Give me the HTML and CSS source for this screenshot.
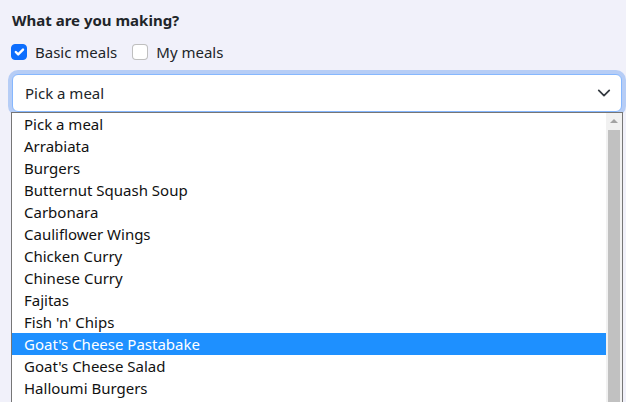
FILE: index.html
```html
<!DOCTYPE html>
<html>
<head>
<meta charset="utf-8">
<link rel="stylesheet" href="styles.css">
</head>
<body>
<div class="page">
  <div class="title">What are you making?</div>
  <div class="checks">
    <label class="check"><span class="box checked"><svg viewBox="0 0 20 20" width="16" height="16"><path d="m6 10 3 3 6-6" fill="none" stroke="#fff" stroke-width="3" stroke-linecap="round" stroke-linejoin="round"/></svg></span>Basic meals</label>
    <label class="check"><span class="box"></span>My meals</label>
  </div>
  <div class="select-wrap">
    <div class="select">
      <span>Pick a meal</span>
      <svg class="chev" viewBox="0 0 16 16" width="14" height="14"><path d="m2 5 6 6 6-6" fill="none" stroke="#343a40" stroke-width="2" stroke-linecap="round" stroke-linejoin="round"/></svg>
    </div>
    <div class="dropdown">
      <div class="options">
        <div class="opt">Pick a meal</div>
        <div class="opt">Arrabiata</div>
        <div class="opt">Burgers</div>
        <div class="opt">Butternut Squash Soup</div>
        <div class="opt">Carbonara</div>
        <div class="opt">Cauliflower Wings</div>
        <div class="opt">Chicken Curry</div>
        <div class="opt">Chinese Curry</div>
        <div class="opt">Fajitas</div>
        <div class="opt">Fish 'n' Chips</div>
        <div class="opt sel">Goat's Cheese Pastabake</div>
        <div class="opt">Goat's Cheese Salad</div>
        <div class="opt">Halloumi Burgers</div>
      </div>
      <div class="scroll">
        <div class="up"></div>
        <div class="thumb"></div>
      </div>
    </div>
  </div>
</div>
</body>
</html>
```
FILE: styles.css
```css
html, body {
  margin: 0;
  padding: 0;
  overflow: hidden;
  height: 100%;
}
body {
  background: #f1f1fa;
  font-family: "Noto Sans", "Open Sans", sans-serif;
  color: #212529;
}
.page {
  padding: 8px 4px 0 12px;
}
.title {
  font-weight: 700;
  font-size: 15px;
  line-height: 24px;
  height: 24px;
}
.checks {
  display: flex;
  gap: 16px;
  margin-top: 8px;
  height: 24px;
  align-items: center;
}
.check {
  display: flex;
  align-items: center;
  gap: 8px;
  font-size: 15px;
  margin-left: -1px;
}
.box {
  width: 16px;
  height: 16px;
  box-sizing: border-box;
  border: 1px solid rgba(0,0,0,.25);
  border-radius: 4px;
  background: #fff;
  display: block;
}
.box.checked {
  background: #0d6efd;
  border-color: #0d6efd;
}
.box svg { display: block; margin: -1px; }
.select-wrap {
  position: relative;
  margin-top: 10px;
}
.select {
  height: 38px;
  box-sizing: border-box;
  border: 1px solid #86b7fe;
  border-radius: 6px;
  background: #fff;
  box-shadow: 0 0 0 4px #b6cdf6;
  display: flex;
  align-items: center;
  justify-content: space-between;
  padding: 0 10px 0 12px;
  font-size: 15px;
}
.chev { display: block; }
.dropdown {
  position: absolute;
  top: 38px;
  left: -1px;
  width: 612px;
  height: 330px;
  box-sizing: border-box;
  border: 1px solid #767676;
  background: #fff;
  display: flex;
}
.options {
  flex: 1;
}
.opt {
  height: 22px;
  line-height: 22px;
  padding-left: 12px;
  font-size: 15px;
  color: #111;
  white-space: nowrap;
}
.opt.sel {
  background: #1e90ff;
  color: #fff;
}
.scroll {
  width: 16px;
  background: #f1f1f1;
  display: flex;
  flex-direction: column;
  align-items: center;
}
.up {
  width: 0;
  height: 0;
  border-left: 4px solid transparent;
  border-right: 4px solid transparent;
  border-bottom: 4px solid #a3a3a3;
  margin-top: 6px;
}
.thumb {
  margin-top: 7px;
  width: 12px;
  flex: 1;
  background: #c1c1c1;
}
```
